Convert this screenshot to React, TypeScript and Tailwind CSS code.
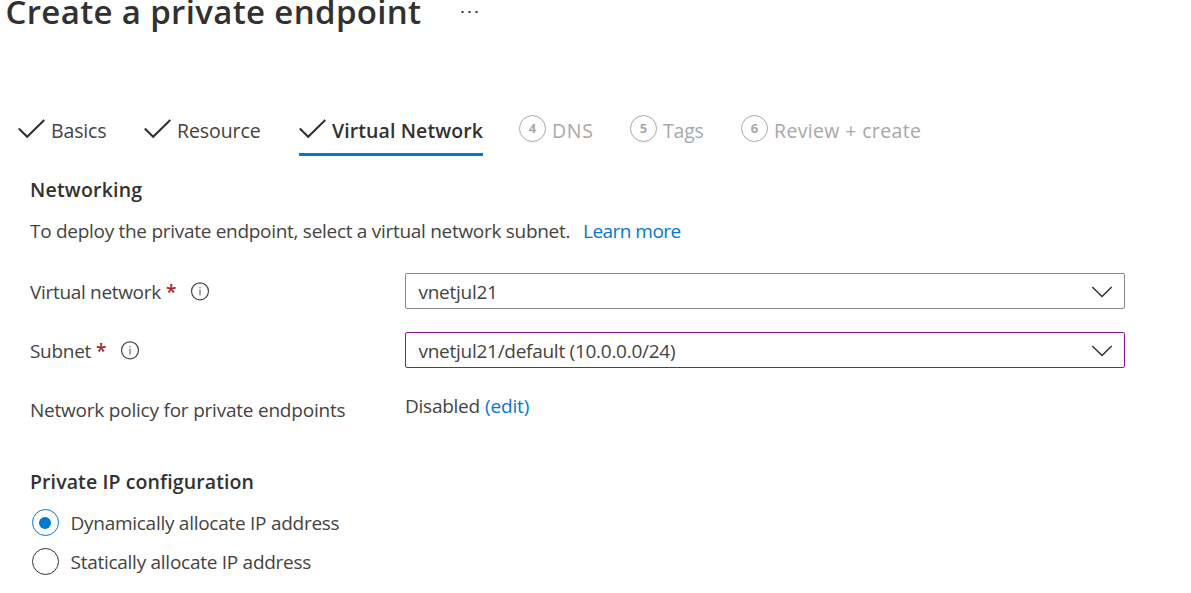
import type { ReactNode } from "react";

function CheckIcon() {
  return (
    <svg width="27" height="20" viewBox="0 0 27 20" fill="none" className="-mt-1 shrink-0">
      <path d="M0.8 9.4 L9.2 17.7 L26.3 1" stroke="#323130" strokeWidth="2.1" />
    </svg>
  );
}

function InfoIcon() {
  return (
    <svg width="20" height="20" viewBox="0 0 20 20" fill="none" className="-mt-px shrink-0">
      <circle cx="10" cy="10.3" r="8.5" stroke="#4a4948" strokeWidth="1.2" />
      <path d="M10 8.6 V14.4" stroke="#6b6a69" strokeWidth="1.2" />
      <path d="M10 6 V7.3" stroke="#6b6a69" strokeWidth="1.2" />
    </svg>
  );
}

function ChevronIcon() {
  return (
    <svg width="22" height="12" viewBox="0 0 22 12" fill="none" className="mt-px shrink-0">
      <path d="M1.3 1 L11 10.5 L20.7 1" stroke="#323130" strokeWidth="1.5" />
    </svg>
  );
}

function StepNumber({ n }: { n: number }) {
  return (
    <span className="-mt-1 flex size-[27px] shrink-0 items-center justify-center rounded-full border-[1.5px] border-[#a9a8a7] text-[13px] leading-none font-bold text-[#a9a8a7]">
      {n}
    </span>
  );
}

function Label({ children }: { children: ReactNode }) {
  return (
    <div className="flex h-9 w-[375px] shrink-0 items-center pt-px">
      {children}
    </div>
  );
}

function Select({ value, border }: { value: string; border: string }) {
  return (
    <div className={`flex h-9 w-[720px] items-center justify-between rounded-[2px] border pr-[11px] pl-[12.5px] ${border}`}>
      <span className="pt-px tracking-[-0.27px]">{value}</span>
      <ChevronIcon />
    </div>
  );
}

function Radio({ label, checked }: { label: string; checked?: boolean }) {
  return (
    <div className="flex h-[27px] items-center gap-[11.5px] pl-[2px]">
      <span
        className={`flex size-[27px] items-center justify-center rounded-full border ${checked ? "border-[#0078d4]" : "border-[#323130]"}`}
      >
        {checked && <span className="mr-px size-3 rounded-full bg-[#0078d4]" />}
      </span>
      <span className="tracking-[-0.27px]">{label}</span>
    </div>
  );
}

export default function App() {
  return (
    <div className="h-[593px] w-[1191px] overflow-hidden bg-white font-['Open_Sans','Noto_Sans',sans-serif] text-[19px] leading-6 whitespace-nowrap text-[#444341]">
      <header className="flex h-[23px] items-center pl-[5.5px]">
        <h1 className="w-[455px] text-[33px] leading-[23px] font-semibold tracking-[0.34px] text-[#323130]">
          Create a private endpoint
        </h1>
        <svg width="18" height="4" viewBox="0 0 18 4" fill="#323130">
          <rect x="0.5" y="1" width="2" height="2" />
          <rect x="7.5" y="1" width="2" height="2" />
          <rect x="14.5" y="1" width="2" height="2" />
        </svg>
      </header>

      <nav className="mt-[85px] flex h-12 pl-[18px] text-[19.5px] leading-[45px]">
        <div className="flex h-[45px] w-[126px] items-center gap-[6px]">
          <CheckIcon />
          <span className="tracking-[-0.15px]">Basics</span>
        </div>
        <div className="flex h-[45px] w-[155px] items-center gap-[6px]">
          <CheckIcon />
          <span className="tracking-[-0.08px]">Resource</span>
        </div>
        <div className="mr-9 flex h-12 w-[184px] items-center gap-[6px] border-b-[3px] border-[#0078d4]">
          <CheckIcon />
          <span className="font-semibold tracking-[0.1px] text-[#323130]">Virtual Network</span>
        </div>
        <div className="flex h-[45px] w-[111px] items-center gap-[6px] text-[#a9a8a7]">
          <StepNumber n={4} />
          <span className="tracking-[0.7px]">DNS</span>
        </div>
        <div className="flex h-[45px] w-[111px] items-center gap-[6px] text-[#a9a8a7]">
          <StepNumber n={5} />
          <span className="tracking-[-0.2px]">Tags</span>
        </div>
        <div className="flex h-[45px] items-center gap-[6px] text-[#a9a8a7]">
          <StepNumber n={6} />
          <span className="tracking-[0.35px]">Review + create</span>
        </div>
      </nav>

      <main className="pl-[30px]">
        <h2 className="mt-[22px] text-[19.5px] font-semibold tracking-[0.2px] text-[#323130]">Networking</h2>
        <p className="mt-[17px] flex">
          <span className="w-[553px] tracking-[-0.29px]">
            To deploy the private endpoint, select a virtual network subnet.
          </span>
          <a className="tracking-[-0.53px] text-[#0078d4]">Learn more</a>
        </p>

        <div className="mt-[30px] flex">
          <Label>
            <span className="w-[136px] tracking-[-0.32px]">Virtual network</span>
            <span className="w-6 font-semibold text-[#a4262c]">*</span>
            <InfoIcon />
          </Label>
          <Select value="vnetjul21" border="border-[#8a8886]" />
        </div>
        <div className="mt-[23px] flex">
          <Label>
            <span className="w-[66px] tracking-[-0.3px]">Subnet</span>
            <span className="w-6 font-semibold text-[#a4262c]">*</span>
            <InfoIcon />
          </Label>
          <Select value="vnetjul21/default (10.0.0.0/24)" border="border-[#881798]" />
        </div>
        <div className="mt-[26px] flex h-7">
          <span className="w-[375px] pt-1 tracking-[-0.22px]">Network policy for private endpoints</span>
          <span className="w-20 tracking-[-0.25px]">Disabled</span>
          <a className="tracking-[-0.15px] text-[#0078d4]">(edit)</a>
        </div>

        <h2 className="mt-12 text-[19.5px] font-semibold tracking-[0.11px] text-[#323130]">
          Private IP configuration
        </h2>
        <div className="mt-[15px] flex flex-col gap-3">
          <Radio label="Dynamically allocate IP address" checked />
          <Radio label="Statically allocate IP address" />
        </div>
      </main>
    </div>
  );
}
